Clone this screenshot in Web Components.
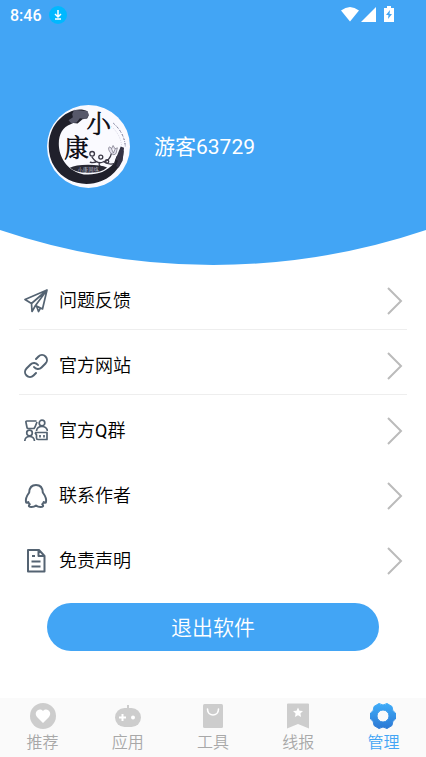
<!DOCTYPE html>
<html lang="zh-CN">
<head>
<meta charset="utf-8">
<meta name="viewport" content="width=device-width, initial-scale=1">
<title>管理</title>
<style>
html, body { margin: 0; }
body { background: #fff; color: #000; font-family: Roboto, "Noto Sans CJK SC", sans-serif; font-weight: 350; }
.latin { font-weight: 400; }
</style>
</head>
<body>
<app-screen>
  <profile-header slot="header" name="游客63729"><status-bar slot="status" time="8:46"></status-bar></profile-header>
  <menu-row icon="plane" divided>问题反馈</menu-row>
  <menu-row icon="link" divided>官方网站</menu-row>
  <menu-row icon="group">官方<span class="latin">Q</span>群</menu-row>
  <menu-row icon="penguin">联系作者</menu-row>
  <menu-row icon="doc">免责声明</menu-row>
  <exit-button slot="action">退出软件</exit-button>
  <tab-bar slot="tabs">
    <tab-item icon="heart">推荐</tab-item>
    <tab-item icon="game">应用</tab-item>
    <tab-item icon="bag">工具</tab-item>
    <tab-item icon="mark">线报</tab-item>
    <tab-item icon="gear" current>管理</tab-item>
  </tab-bar>
</app-screen>
<script>
const define = (tag, render) => customElements.define(tag, class extends HTMLElement {
  connectedCallback() {
    if (!this.shadowRoot) this.attachShadow({ mode: 'open' }).innerHTML = render(this);
  }
});

const menuIcons = {
  plane: '<path stroke-width="1.700" d="M23 1 1 10.500l6.500 4L23 1l-4.500 19-7-3.500L23 1M7.500 14.500l.5 8 3.500-6M12.500 17l2 5.500 2-3.500"/>',
  link: '<path stroke-linecap="round" d="M10 13a5 5 0 0 0 7.500.5l4-4a4.500 4.500 0 0 0-7-7l-2.500 2.500M14 11a5 5 0 0 0-7.500-.5l-4 4a4.500 4.500 0 0 0 7 7l2.500-2.500"/>',
  group: '<g stroke-width="1.700"><path d="M12.500 2H3Q1.500 2 2 3.500L3 8.500q0 1 1.500 1H10l1-1.500 2-5"/><circle cx="18" cy="4" r="2.800"/><path d="M12.500 12c.3-3 2.200-4.500 5.500-4.500s5 1.500 5.500 4.500"/><circle cx="5.500" cy="14" r="2.800"/><path d="M.8 22c.2-3 1.700-4.500 4.700-4.500s4.700 1.500 5 4.500"/><path d="M11 13.500h12v7H14q-1.500 0-1.500-1.500V16L11 13.500M16 16v2.500M20 16v2.500"/></g>',
  penguin: '<path d="M12 1C7.800 1 5.400 4 5.200 8.500 3 11.500 1.300 15 2 18c.3 1.200 1.500.8 2.300 0 .3 1 .8 1.600 1.500 2.300-2 1.700-.5 2.700 1.700 2.700 2 0 3.400-.6 4.500-1.500 1.100.9 2.500 1.500 4.500 1.500 2.200 0 3.700-1 1.700-2.700.7-.7 1.200-1.300 1.500-2.300.8.8 2 1.200 2.300 0 .7-3-1-6.500-3.200-9.500C18.600 4 16.200 1 12 1Z"/>',
  doc: '<path d="M4 1h11l5.500 6v15.500H4zM14.500 1.500V7h5.500M8 7h3M7.500 12.500h9M7.500 17.500h9"/>'
};

const tabIcons = {
  heart: '<circle cx="14" cy="14" r="13"/><path fill="#fff" d="M14 21 8 15c-3.800-4.500 2-10 6-6 4-4 9.800 1.500 6 6z"/>',
  game: '<rect x="13" y="3" width="2" height="5"/><rect x="1" y="6" width="26" height="19" rx="9.500"/><path d="M8.500 12v7M5 15.500h7" stroke="#fff" stroke-width="2"/><circle cx="19" cy="15.500" r="2" fill="#fff"/>',
  bag: '<rect x="4" y="2" width="20" height="24" rx="1.500"/><path d="M8.500 7c0 8 11 8 11 0" fill="none" stroke="#fff" stroke-width="1.600" stroke-linecap="round"/>',
  mark: '<path d="M4 1.500h20q1 0 1 1v24L14 22 3 26.500v-24q0-1 1-1z"/><path fill="#fff" d="m14 5.500 1.500 3.200 3.500.4-2.600 2.300.7 3.500-3.100-1.700-3.100 1.700.7-3.500L9 9.100l3.500-.4z"/>',
  gear: '<defs><linearGradient id="g" x1="0" y1="0" x2="0" y2="1"><stop stop-color="#3eacf9"/><stop offset="1" stop-color="#2d79d4"/></linearGradient></defs><path fill="url(#g)" stroke="url(#g)" stroke-width="1" stroke-linejoin="round" fill-rule="evenodd" d="M26.500 11v6Q23 18.500 23 23.500L18 26.500Q14 23.500 10 26.500L5 23.500Q5 18.500 1.500 17V11Q5 9.500 5 4.500L10 1.500Q14 4.500 18 1.500L23 4.500Q23 9.500 26.500 11zM14 8a6 6 0 1 0 0 12 6 6 0 0 0 0-12z"/>'
};

define('app-screen', () => `
<style>
:host { display: flex; flex-direction: column; min-height: 100vh; }
main { flex: 1; }
nav { padding: 0 19px; }
</style>
<slot name="header"></slot>
<main><nav><slot></slot></nav><slot name="action"></slot></main>
<slot name="tabs"></slot>`);

define('status-bar', el => `
<style>
:host { display: flex; align-items: center; justify-content: space-between; height: 30px; padding: 0 32px 0 10px; }
div { display: flex; align-items: center; gap: 7px; font-size: 16px; font-weight: 500; }
.signals { gap: 2px; padding-bottom: 2px; }
svg { display: block; }
.battery { margin-left: 6px; }
</style>
<div><span>${el.getAttribute('time')}</span>
<svg width="18" height="18" viewBox="0 0 18 18"><circle cx="9" cy="9" r="9" fill="#00b8ff"/><path d="M9 4v7M6 8l3 3 3-3M6 13h6" fill="none" stroke="#fff" stroke-width="1.500"/></svg></div>
<div class="signals">
<svg width="18" height="16" viewBox="0 0 18 16" fill="#fff"><path d="M0 4.500q9-7 18 0L9 15.500z"/></svg>
<svg width="15" height="16" viewBox="0 0 15 16" fill="#fff"><path d="M15 1v15H0z"/></svg>
<svg class="battery" width="10" height="16" viewBox="0 0 10 16"><path fill="#fff" d="M3 0h4v2h3v14H0V2h3z"/><path fill="#42a5f5" d="M6 4 2 9h2.500L4 13l4-5H5.500z"/></svg>
</div>`);

define('user-avatar', () => `
<style>
:host { display: block; width: 83px; height: 83px; }
svg { display: block; width: 100%; height: 100%; }
text { font-family: "Noto Serif CJK SC", "Noto Sans CJK SC", serif; }
.name { fill: #080810; stroke: #080810; stroke-width: 2px; }
</style>
<svg viewBox="22 20 250 250" role="img" aria-label="头像">
<circle cx="147" cy="145" r="125" fill="#fafaff"/>
<path fill="#20202b" d="M144 39C120 25 80 37 53 70 20 110 20 168 45 207c31 48 92 62 141 42 42-17 66-54 67-92l-10 10-12 8-7 20c-24 29-56 37-91 34-44-7-72-45-75-83-3-33 10-60 35-68l8-4 13 2 15-13 14-2 5-10z"/>
<path fill="#6f7086" d="m104 34 41 5 3 13-10 10-17-2-10 13-16 2-8-9 13-9-2-10z" opacity=".7"/>
<path d="M222 75q34 30 36 72" fill="none" stroke="#59597c" stroke-width="3" stroke-dasharray="5 3 2 4"/>
<path d="M216 85q28 24 31 60" fill="none" stroke="#a8a6bf" stroke-width="2" stroke-dasharray="2 5"/>
<path d="M244 145l10 4-4 38-12 22-8-5 6-16-8-3z" fill="#343244"/>
<text class="name" x="141" y="105" font-size="74">小</text>
<text class="name" x="74" y="178" font-size="74">康</text>
<g fill="none" stroke="#3b3947" stroke-width="4"><path d="M157 176q17 25 35 15c15-2 22-15 24-25M174 190q-12 6-23 2M192 191q18 11 34 5M180 193q-5 12 11 15"/><circle cx="158" cy="167" r="7"/><circle cx="184" cy="177" r="6"/><circle cx="203" cy="190" r="5"/></g>
<path d="M215 166q-12-14-5-20l7 5 4-9 6 10 7-3-4 17q-5 8-15 0zM216 151l6 14 5-12" fill="#e4e2ef" stroke="#696777" stroke-width="2"/>
<path d="M91 209q16-9 55-9 38 0 57 8-15 16-57 16-39 0-55-15z" fill="#282833"/>
<text x="114" y="221" font-size="16" fill="#d8d8e0">小康网络</text>
</svg>`);

define('profile-header', el => `
<style>
:host { display: block; color: #fff; }
.panel { background: #42a5f5; padding-bottom: 42px; }
.user { display: flex; align-items: center; gap: 24px; padding: 75px 47px 0; }
h1 { margin: 0; font-size: 21px; line-height: 30px; font-weight: 400; }
.curve { display: block; width: 100%; height: 35px; }
</style>
<header class="panel"><slot name="status"></slot>
<div class="user"><user-avatar></user-avatar><h1>${el.getAttribute('name')}</h1></div></header>
<svg class="curve" viewBox="0 0 426 35" preserveAspectRatio="none"><path fill="#42a5f5" d="M0 0A666 666 0 0 0 426 0z"/></svg>`);

define('menu-row', el => `
<style>
:host { display: block; }
a { display: flex; align-items: center; box-sizing: border-box; height: 65px; padding: 8px 4px 0 5px; border-bottom: 1px solid transparent; color: #000; font-size: 18px; line-height: 26px; text-decoration: none; }
:host([divided]) a { border-color: #eee; }
.label { flex: 1; margin-left: 11px; }
svg { display: block; fill: none; stroke: #546372; stroke-width: 2; stroke-linejoin: round; }
.arrow { stroke: #bbb; stroke-linejoin: miter; }
</style>
<a href="#${el.getAttribute('icon')}"><svg width="24" height="24" viewBox="0 0 24 24">${menuIcons[el.getAttribute('icon')]}</svg>
<span class="label"><slot></slot></span>
<svg class="arrow" width="16" height="28" viewBox="0 0 16 28"><path d="m1 1 13 13L1 27"/></svg></a>`);

define('exit-button', () => `
<style>
:host { display: block; padding: 13px 47px 24px; }
button { display: block; width: 100%; height: 48px; padding: 0 0 2px; border: 0; border-radius: 24px; background: #42a5f5; color: #fff; font-family: inherit; font-size: 21px; font-weight: inherit; }
</style>
<button type="button"><slot></slot></button>`);

define('tab-bar', () => `
<style>
:host { display: block; background: #fafafa; }
nav { display: flex; height: 59px; }
</style>
<nav><slot></slot></nav>`);

define('tab-item', el => `
<style>
:host { display: block; flex: 1; color: #a8a8a8; }
:host([current]) { color: #42a5f5; }
a { display: flex; flex-direction: column; align-items: center; padding-top: 4px; color: inherit; font-size: 16px; line-height: 26px; text-decoration: none; }
svg { display: block; fill: #cdcdcd; }
</style>
<a href="#${el.getAttribute('icon')}"><svg width="28" height="28" viewBox="0 0 28 28">${tabIcons[el.getAttribute('icon')]}</svg><span><slot></slot></span></a>`);
</script>
</body>
</html>
